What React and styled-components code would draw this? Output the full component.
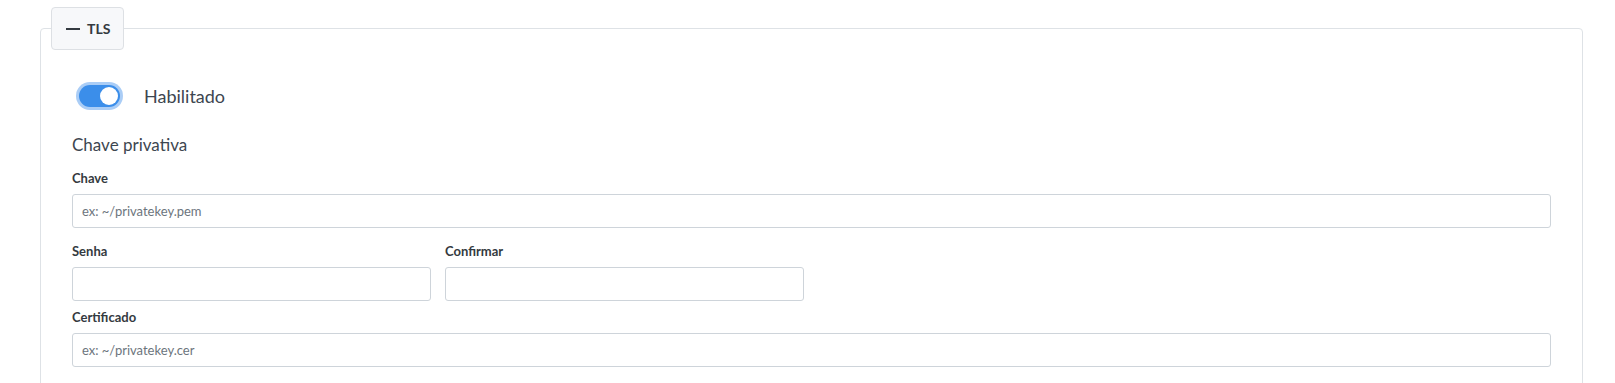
import React, { useState } from 'react'
import styled, { createGlobalStyle } from 'styled-components'

const GlobalStyle = createGlobalStyle`
  html, body {
    margin: 0;
    background: #ffffff;
    font-family: Lato, "Open Sans", sans-serif;
    color: #343a40;
  }
`

const Page = styled.div`
  padding: 7px 32px 0 40px;
`

const Fieldset = styled.fieldset`
  margin: 0;
  padding: 0 31px 40px 31px;
  border: 1px solid #dee2e6;
  border-radius: 4px;
  min-width: 0;
`

const Legend = styled.legend`
  margin-left: -21px;
  padding: 0;
`

const LegendButton = styled.button`
  display: flex;
  align-items: center;
  gap: 7px;
  height: 43px;
  padding: 0 13px 0 14px;
  background: #f7f8fa;
  border: 1px solid #dde0e4;
  border-radius: 4px;
  font-family: Lato, sans-serif;
  font-weight: 700;
  font-size: 14px;
  color: #343a40;
  cursor: pointer;
`

const Dash = styled.span`
  display: block;
  width: 14px;
  height: 2px;
  background: #343a40;
`

const SwitchRow = styled.label`
  display: flex;
  align-items: center;
  gap: 24px;
  margin: 35px 0 0 7px;
  cursor: pointer;
`

const Track = styled.span`
  position: relative;
  width: 41px;
  height: 22px;
  border-radius: 11px;
  background: ${p => (p.$on ? '#3b8eea' : '#ced4da')};
  box-shadow: 0 0 0 3px #aacdf6;
`

const Thumb = styled.span`
  position: absolute;
  top: 2px;
  left: ${p => (p.$on ? '21px' : '2px')};
  width: 18px;
  height: 18px;
  border-radius: 50%;
  background: #ffffff;
`

const SwitchText = styled.span`
  font-size: 18px;
  color: #3d4650;
`

const SectionTitle = styled.div`
  margin-top: 28px;
  font-size: 17px;
  line-height: 20px;
  color: #3d4650;
`

const Label = styled.div`
  margin-top: ${p => p.$top}px;
  font-size: 13px;
  font-weight: 700;
  line-height: 17px;
  color: #343a40;
`

const Input = styled.input`
  display: block;
  box-sizing: border-box;
  width: 100%;
  height: 34px;
  margin-top: 7px;
  padding: 0 9px;
  border: 1px solid #ced4da;
  border-radius: 3px;
  font-family: Lato, sans-serif;
  font-size: 13px;
  color: #495057;
  background: #fff;
  &::placeholder {
    color: #6c757d;
  }
`

const Row = styled.div`
  display: grid;
  grid-template-columns: 359px 359px;
  gap: 14px;
`

const Field = styled.div``

export default function App() {
  const [on, setOn] = useState(true)
  return (
    <Page>
      <GlobalStyle />
      <Fieldset>
        <Legend>
          <LegendButton type="button">
            <Dash />
            TLS
          </LegendButton>
        </Legend>
        <SwitchRow onClick={() => setOn(!on)}>
          <Track $on={on}>
            <Thumb $on={on} />
          </Track>
          <SwitchText>Habilitado</SwitchText>
        </SwitchRow>
        <SectionTitle>Chave privativa</SectionTitle>
        <Label $top={15}>Chave</Label>
        <Input placeholder="ex: ~/privatekey.pem" />
        <Row>
          <Field>
            <Label $top={15}>Senha</Label>
            <Input type="password" />
          </Field>
          <Field>
            <Label $top={15}>Confirmar</Label>
            <Input type="password" />
          </Field>
        </Row>
        <Label $top={8}>Certificado</Label>
        <Input placeholder="ex: ~/privatekey.cer" />
      </Fieldset>
    </Page>
  )
}
